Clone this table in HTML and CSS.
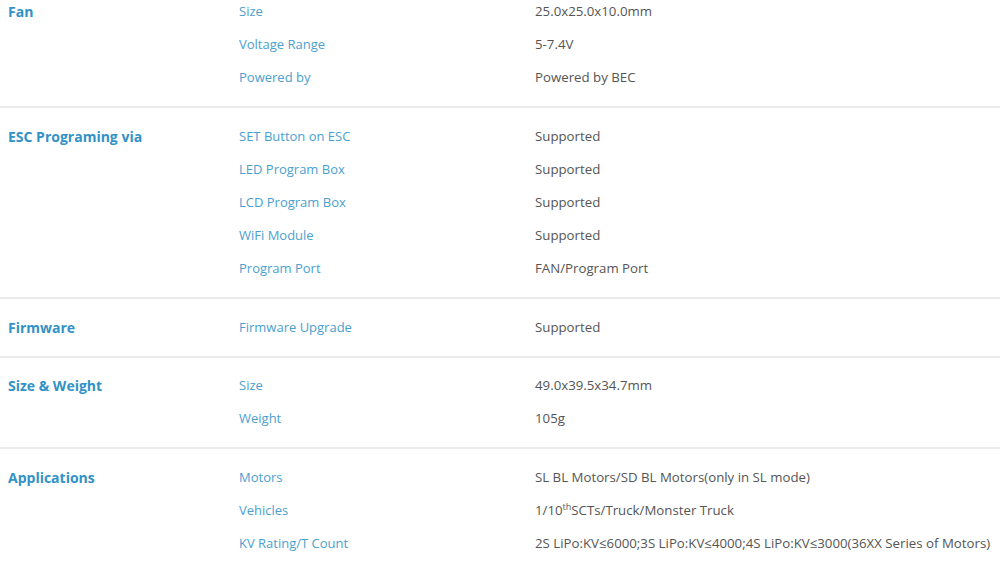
FILE: index.html
```html
<!DOCTYPE html>
<html>
<head>
<meta charset="utf-8">
<link rel="stylesheet" href="styles.css">
</head>
<body>
<div class="specs">
  <section class="group first">
    <div class="cat">Fan</div>
    <div class="rows">
      <div class="row"><span class="key">Size</span><span class="val">25.0x25.0x10.0mm</span></div>
      <div class="row"><span class="key">Voltage Range</span><span class="val">5-7.4V</span></div>
      <div class="row"><span class="key">Powered by</span><span class="val">Powered by BEC</span></div>
    </div>
  </section>
  <section class="group">
    <div class="cat">ESC Programing via</div>
    <div class="rows">
      <div class="row"><span class="key">SET Button on ESC</span><span class="val">Supported</span></div>
      <div class="row"><span class="key">LED Program Box</span><span class="val">Supported</span></div>
      <div class="row"><span class="key">LCD Program Box</span><span class="val">Supported</span></div>
      <div class="row"><span class="key">WiFi Module</span><span class="val">Supported</span></div>
      <div class="row"><span class="key">Program Port</span><span class="val">FAN/Program Port</span></div>
    </div>
  </section>
  <section class="group">
    <div class="cat">Firmware</div>
    <div class="rows">
      <div class="row"><span class="key">Firmware Upgrade</span><span class="val">Supported</span></div>
    </div>
  </section>
  <section class="group">
    <div class="cat">Size &amp; Weight</div>
    <div class="rows">
      <div class="row"><span class="key">Size</span><span class="val">49.0x39.5x34.7mm</span></div>
      <div class="row"><span class="key">Weight</span><span class="val">105g</span></div>
    </div>
  </section>
  <section class="group last">
    <div class="cat">Applications</div>
    <div class="rows">
      <div class="row"><span class="key">Motors</span><span class="val">SL BL Motors/SD BL Motors(only in SL mode)</span></div>
      <div class="row"><span class="key">Vehicles</span><span class="val">1/10<sup>th</sup>SCTs/Truck/Monster Truck</span></div>
      <div class="row"><span class="key">KV Rating/T Count</span><span class="val">2S LiPo:KV≤6000;3S LiPo:KV≤4000;4S LiPo:KV≤3000(36XX Series of Motors)</span></div>
    </div>
  </section>
</div>
</body>
</html>
```
FILE: styles.css
```css
html, body {
  margin: 0;
  padding: 0;
  background: #ffffff;
}
body {
  font-family: "Open Sans", "Liberation Sans", sans-serif;
  font-size: 13px;
  overflow: hidden;
}
.specs {
  margin-top: -5px;
}
.group {
  display: flex;
  padding: 12px 0 12px 8px;
  border-bottom: 2px solid #ebebeb;
}
.group.first {
  padding-top: 0;
}
.group.last {
  border-bottom: none;
}
.group + .group {
  margin-top: -0.25px;
}
.cat {
  width: 231px;
  flex: none;
  line-height: 33px;
  font-size: 14px;
  font-weight: 700;
  color: #3292c6;
}
.rows {
  flex: 1;
  display: flex;
  flex-direction: column;
}
.row {
  display: grid;
  grid-template-columns: 296px 1fr;
  line-height: 33px;
  height: 33px;
}
.key {
  color: #4b9fcf;
}
.val {
  color: #555555;
  font-size: 13.25px;
}
.val sup {
  font-size: 9px;
  line-height: 0;
  vertical-align: 5px;
}
```
